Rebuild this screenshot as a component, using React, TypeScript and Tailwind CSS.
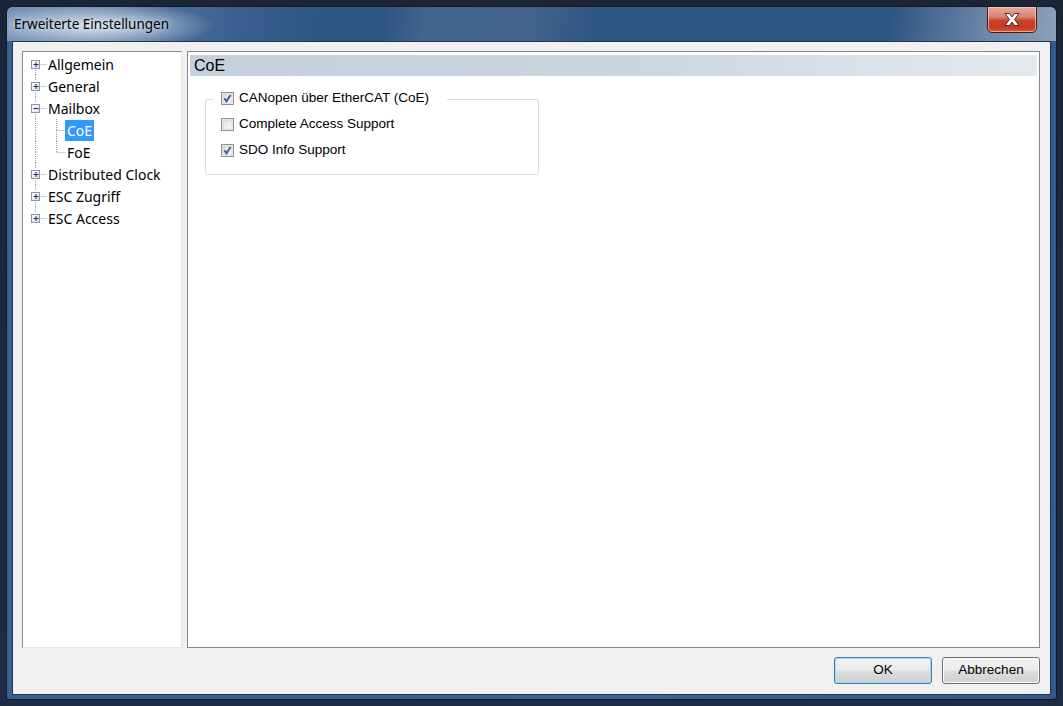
import React from "react";

type Box = "plus" | "minus" | null;

function Connector({ w = 24, top = true, bottom = true, horiz = true, box = null }: { w?: number; top?: boolean; bottom?: boolean; horiz?: boolean; box?: Box }) {
  const cx = w === 24 ? 12.5 : 9.5;
  return (
    <svg width={w} height={22} className="shrink-0 block">
      <g stroke="#a0a0a0" strokeWidth="1" strokeDasharray="1 1" fill="none">
        {top && <line x1={cx} y1={0} x2={cx} y2={box ? 6 : 11} />}
        {bottom && <line x1={cx} y1={box ? 15 : 11} x2={cx} y2={22} />}
        {horiz && <line x1={box ? cx + 5 : cx} y1={11.5} x2={w} y2={11.5} />}
      </g>
      {box && (
        <g>
          <defs>
            <linearGradient id="bx" x1="0" y1="0" x2="1" y2="1">
              <stop offset="0" stopColor="#ffffff" />
              <stop offset="1" stopColor="#d8dde6" />
            </linearGradient>
          </defs>
          <rect x={cx - 4} y={7.5} width={8} height={8} fill="url(#bx)" stroke="#8b95a8" />
          <line x1={cx - 2} y1={11.5} x2={cx + 3} y2={11.5} stroke="#1e2f5c" />
          {box === "plus" && <line x1={cx + 0.5} y1={9} x2={cx + 0.5} y2={14} stroke="#1e2f5c" strokeWidth="1" />}
        </g>
      )}
    </svg>
  );
}

function Check({ checked }: { checked: boolean }) {
  return (
    <svg width={13} height={13} className="shrink-0 block">
      <defs>
        <linearGradient id="cb" x1="0" y1="0" x2="1" y2="1">
          <stop offset="0" stopColor="#dcdcdc" />
          <stop offset="1" stopColor="#fbfbfb" />
        </linearGradient>
      </defs>
      <rect x={0.5} y={0.5} width={12} height={12} fill="#f4f4f4" stroke="#8e8f8f" />
      <rect x={2} y={2} width={9} height={9} fill="url(#cb)" stroke="#c8c8c8" strokeWidth="0.6" />
      {checked && <path d="M3.4 6.4 L5.5 9.3 L9.6 3" stroke="#44599a" strokeWidth="1.9" fill="none" />}
    </svg>
  );
}

const treeFont = { fontFamily: '"Noto Sans", "Open Sans", sans-serif' };
const sysFont = { fontFamily: '"Liberation Sans", Arial, sans-serif' };

function Btn({ children, primary }: { children: React.ReactNode; primary?: boolean }) {
  return (
    <div
      className={
        "w-[98px] h-[27px] rounded-[3px] border flex items-center justify-center text-[13.5px] text-black bg-[linear-gradient(#f2f2f2_0%,#ebebeb_48%,#dddddd_52%,#cfcfcf_100%)] " +
        (primary ? "border-[#3c7fb1] shadow-[inset_0_0_0_1px_#9fdcf5]" : "border-[#707070] shadow-[inset_0_0_0_1px_#fbfbfb]")
      }
      style={sysFont}
    >
      {children}
    </div>
  );
}

export default function App() {
  return (
    <div className="w-[1063px] h-[706px] bg-[linear-gradient(#1b2536,#1e2d45)] pl-[6px] pt-[6px]">
      <div className="w-[1051px] h-[694px] rounded-t-[7px] rounded-b-[3px] border border-[#111a28] bg-[linear-gradient(90deg,#36608f_0%,#3a6594_60%,#31598a_100%)] shadow-[inset_0_1px_0_#c9d5e3] flex flex-col overflow-hidden">
        {/* Titelleiste */}
        <div className="h-[34px] flex items-start justify-between [background-image:radial-gradient(ellipse_120px_24px_at_88px_19px,rgba(220,229,240,0.97),rgba(220,229,240,0)),linear-gradient(100deg,#7190b2_0%,#3b6090_22%,#2f5582_30%,#2f5582_36%,#42658d_40%,#42648c_50%,#2f5582_56%,#2f5582_84%,#6b86a8_93%,#8ba1bb_100%)]">
          <div className="pl-[7px] pt-[8px] text-[13.5px] leading-[18px] text-black [text-shadow:0_0_6px_#e4ecf5]" style={treeFont}>
            Erweiterte Einstellungen
          </div>
          <div className="mr-[19px] -mt-px w-[50px] h-[27px] rounded-b-[5px] border border-[#4a1a16] bg-[linear-gradient(#e9aa9d_0%,#d98070_40%,#c9412a_55%,#c63a20_80%,#d9563a_100%)] shadow-[inset_0_0_0_1px_rgba(255,220,210,0.6)] flex items-center justify-center">
            <svg width="20" height="15" viewBox="0 0 20 15">
              <path d="M3 1.5 L7.5 1.5 L10 5 L12.5 1.5 L17 1.5 L12.5 7.5 L17 13.5 L12.5 13.5 L10 10 L7.5 13.5 L3 13.5 L7.5 7.5 Z" fill="#ffffff" stroke="#4b2a28" strokeWidth="1" strokeLinejoin="round" />
            </svg>
          </div>
        </div>

        {/* Inhalt */}
        <div className="mx-[5px] mb-[4px] border border-[#1f3350] flex-1 bg-[#f0f0f0] flex flex-col pl-[9px] pr-[10px] pt-[9px] pb-[10px]">
          <div className="flex gap-[5px] flex-1 min-h-0">
            {/* Baum */}
            <div className="w-[160px] border border-t-[#8a8a8a] border-l-[#8a8a8a] border-r-[#e3e3e3] border-b-[#e3e3e3] bg-white pt-[1px] text-[14px] text-black" style={treeFont}>
              <div className="flex items-center h-[22px]"><Connector top={false} box="plus" /><span className="ml-[1px]">Allgemein</span></div>
              <div className="flex items-center h-[22px]"><Connector box="plus" /><span className="ml-[1px]">General</span></div>
              <div className="flex items-center h-[22px]"><Connector box="minus" /><span className="ml-[1px]">Mailbox</span></div>
              <div className="flex items-center h-[22px]">
                <Connector horiz={false} />
                <Connector w={18} />
                <span className="bg-[#3399ff] text-white h-[21px] leading-[21px] px-[2px]">CoE</span>
              </div>
              <div className="flex items-center h-[22px]">
                <Connector horiz={false} />
                <Connector w={18} bottom={false} />
                <span className="px-[2px]">FoE</span>
              </div>
              <div className="flex items-center h-[22px]"><Connector box="plus" /><span className="ml-[1px]">Distributed Clock</span></div>
              <div className="flex items-center h-[22px]"><Connector box="plus" /><span className="ml-[1px]">ESC Zugriff</span></div>
              <div className="flex items-center h-[22px]"><Connector bottom={false} box="plus" /><span className="ml-[1px]">ESC Access</span></div>
            </div>

            {/* Detailbereich */}
            <div className="flex-1 border border-[#828790] bg-white px-[2px] pt-[3px]">
              <div className="h-[21px] bg-[linear-gradient(90deg,#c4d0dc_0%,#cad5e0_50%,#e3e9ef_100%)] pl-[4px] text-[16px] leading-[21px] text-black" style={sysFont}>
                CoE
              </div>
              <div className="ml-[15px] mt-[23px] w-[334px] border border-[#d5dfe5] rounded-[3px] pb-[17px] text-[13.5px] text-black" style={sysFont}>
                <div className="-mt-[8px] ml-[7px] w-fit bg-white pl-[8px] pr-[18px] flex items-center gap-[5px] h-[13px]">
                  <Check checked />
                  <span>CANopen über EtherCAT (CoE)</span>
                </div>
                <div className="flex flex-col gap-[13px] mt-[13px] pl-[15px]">
                  <div className="flex items-center gap-[5px] h-[13px]">
                    <Check checked={false} />
                    <span>Complete Access Support</span>
                  </div>
                  <div className="flex items-center gap-[5px] h-[13px]">
                    <Check checked />
                    <span>SDO Info Support</span>
                  </div>
                </div>
              </div>
            </div>
          </div>

          <div className="mt-[9px] flex justify-end gap-[10px]">
            <Btn primary>OK</Btn>
            <Btn>Abbrechen</Btn>
          </div>
        </div>
      </div>
    </div>
  );
}
